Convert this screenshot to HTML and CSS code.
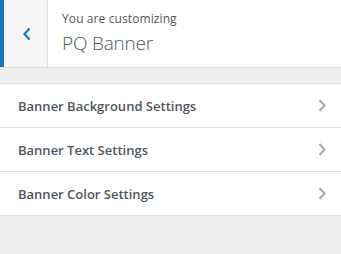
FILE: index.html
```html
<!DOCTYPE html>
<html>
<head>
<meta charset="utf-8">
<link rel="stylesheet" href="styles.css">
</head>
<body>
<div class="panel">
  <div class="head">
    <button class="back" aria-label="Back">
      <svg width="10" height="14" viewBox="0 0 10 14"><path d="M7.5 1.5 L2.5 7 L7.5 12.5" fill="none" stroke="#2271b1" stroke-width="2.2"/></svg>
    </button>
    <div class="meta">
      <div class="small">You are customizing</div>
      <div class="title">PQ Banner</div>
    </div>
  </div>
  <ul class="sections">
    <li class="section"><span>Banner Background Settings</span><svg class="chev" width="8" height="13" viewBox="0 0 8 13"><path d="M1.5 1 L6.5 6.5 L1.5 12" fill="none" stroke="#a7aaad" stroke-width="2"/></svg></li>
    <li class="section"><span>Banner Text Settings</span><svg class="chev" width="8" height="13" viewBox="0 0 8 13"><path d="M1.5 1 L6.5 6.5 L1.5 12" fill="none" stroke="#a7aaad" stroke-width="2"/></svg></li>
    <li class="section"><span>Banner Color Settings</span><svg class="chev" width="8" height="13" viewBox="0 0 8 13"><path d="M1.5 1 L6.5 6.5 L1.5 12" fill="none" stroke="#a7aaad" stroke-width="2"/></svg></li>
  </ul>
</div>
</body>
</html>
```
FILE: styles.css
```css
html, body {
  margin: 0;
  padding: 0;
  background: #eeeeee;
  font-family: "Open Sans", "Noto Sans", sans-serif;
  color: #50575e;
}
.panel {
  width: 341px;
}
.head {
  display: flex;
  height: 67px;
  background: #fff;
  border-bottom: 1px solid #dcdcde;
}
.back {
  width: 48px;
  height: 67px;
  box-sizing: border-box;
  border: 0;
  border-left: 4px solid #2271b1;
  border-right: 1px solid #dcdcde;
  background: #f3f5f6;
  display: flex;
  align-items: center;
  justify-content: center;
  padding: 0 0 0 2px;
  margin: 0;
}
.meta {
  padding: 11px 0 0 14px;
}
.small {
  font-size: 12px;
  line-height: 16px;
  letter-spacing: 0.1px;
  color: #50575e;
}
.title {
  font-size: 19px;
  font-weight: 300;
  line-height: 26px;
  letter-spacing: -0.2px;
  margin-top: 3px;
  color: #50575e;
}
.sections {
  list-style: none;
  margin: 15px 0 0;
  padding: 0;
  border-top: 1px solid #dcdcde;
}
.section {
  display: flex;
  align-items: center;
  justify-content: space-between;
  height: 43px;
  padding: 0 15px 0 18px;
  background: #fff;
  border-bottom: 1px solid #dcdcde;
  font-size: 13px;
  font-weight: 600;
  color: #50575e;
}
.chev {
  display: block;
}
```
